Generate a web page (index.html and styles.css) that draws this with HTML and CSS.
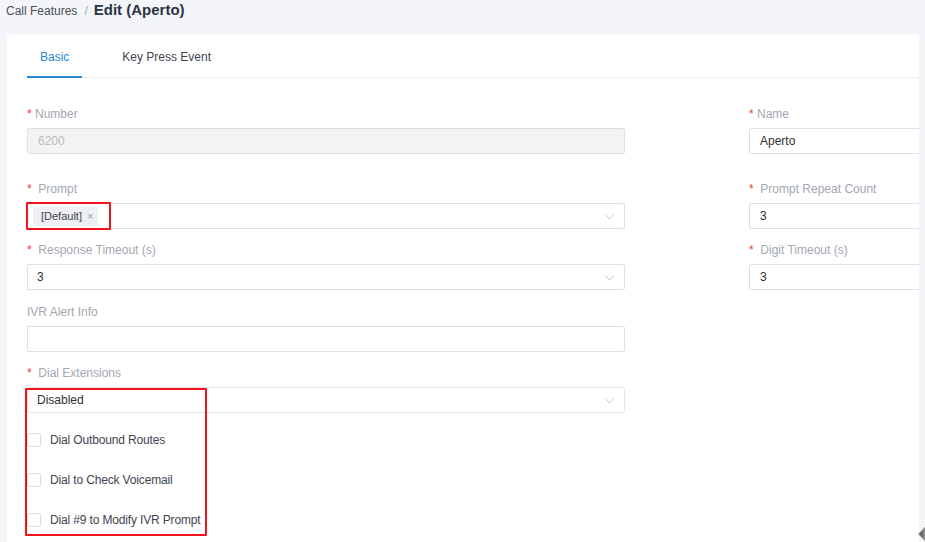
FILE: index.html
```html
<!DOCTYPE html>
<html>
<head>
<meta charset="utf-8">
<link rel="stylesheet" href="styles.css">
</head>
<body>
<div class="crumbs">
  <span class="crumb-link">Call Features</span>
  <span class="crumb-sep">/</span>
  <span class="crumb-title">Edit (Aperto)</span>
</div>
<div class="card">
  <div class="tabs">
    <div class="tab active">Basic</div>
    <div class="tab">Key Press Event</div>
  </div>
  <div class="form">
    <div class="col">
      <div class="field first">
        <div class="label"><span class="req">*</span> Number</div>
        <div class="input disabled">6200</div>
      </div>
      <div class="field">
        <div class="label"><span class="req">*</span>&nbsp; Prompt</div>
        <div class="input select">
          <span class="tag">[Default] <span class="tag-x">×</span></span>
          <span class="mark mark-tag"></span>
          <svg class="chev" width="9" height="6" viewBox="0 0 9 6"><path d="M0.5 0.5 L4.5 5 L8.5 0.5" fill="none" stroke="#c0c4cc" stroke-width="1"/></svg>
        </div>
      </div>
      <div class="field wide">
        <div class="label"><span class="req">*</span>&nbsp; Response Timeout (s)</div>
        <div class="input select">3
          <svg class="chev" width="9" height="6" viewBox="0 0 9 6"><path d="M0.5 0.5 L4.5 5 L8.5 0.5" fill="none" stroke="#c0c4cc" stroke-width="1"/></svg>
        </div>
      </div>
      <div class="field">
        <div class="label">IVR Alert Info</div>
        <div class="input"></div>
      </div>
      <div class="field dial">
        <div class="label"><span class="req">*</span>&nbsp; Dial Extensions</div>
        <div class="input select">Disabled
          <svg class="chev" width="9" height="6" viewBox="0 0 9 6"><path d="M0.5 0.5 L4.5 5 L8.5 0.5" fill="none" stroke="#c0c4cc" stroke-width="1"/></svg>
        </div>
        <div class="checks">
          <label class="check"><span class="box"></span>Dial Outbound Routes</label>
          <label class="check"><span class="box"></span>Dial to Check Voicemail</label>
          <label class="check"><span class="box"></span>Dial #9 to Modify IVR Prompt</label>
        </div>
        <span class="mark mark-dial"></span>
      </div>
    </div>
    <div class="col">
      <div class="field first">
        <div class="label"><span class="req">*</span> Name</div>
        <div class="input">Aperto</div>
      </div>
      <div class="field">
        <div class="label"><span class="req">*</span>&nbsp; Prompt Repeat Count</div>
        <div class="input">3</div>
      </div>
      <div class="field wide">
        <div class="label"><span class="req">*</span>&nbsp; Digit Timeout (s)</div>
        <div class="input">3</div>
      </div>
    </div>
  </div>
</div>
<svg class="edge-arrow" width="8" height="14" viewBox="0 0 8 14"><path d="M7 0 L7 14 L0 7 Z" fill="#8a8a8a"/><path d="M5 3 L5 11 L1.5 7 Z" fill="#666"/></svg>
</body>
</html>
```
FILE: styles.css
```css
* { box-sizing: border-box; }
html, body { margin: 0; padding: 0; }
body {
  width: 925px;
  height: 542px;
  overflow: hidden;
  background: #f4f5f8;
  font-family: "Liberation Sans", Arial, sans-serif;
  font-size: 12px;
  color: #303133;
  position: relative;
}
.crumbs {
  height: 35px;
  padding: 1px 0 0 6px;
  display: flex;
  align-items: baseline;
}
.crumb-link { color: #4a4f5a; font-size: 12px; }
.crumb-sep { color: #a8abb2; margin: 0 6px 0 7px; font-size: 12px; }
.crumb-title { color: #2c3444; font-size: 15px; font-weight: bold; }
.card {
  margin-left: 7px;
  width: 912px;
  height: 507px;
  background: #fff;
  overflow: hidden;
}
.tabs {
  margin-left: 20px;
  height: 43px;
  display: flex;
  border-bottom: 1px solid #eceef2;
}
.tab {
  padding: 3px 13px 0;
  margin-right: 27px;
  display: flex;
  align-items: center;
  color: #3f4451;
  font-size: 12px;
  margin-bottom: -1px;
  border-bottom: 2px solid transparent;
}
.tab.active {
  color: #2a86d1;
  border-bottom-color: #2a86d1;
}
.form {
  display: flex;
  gap: 124px;
  padding: 28px 0 0 20px;
}
.col {
  width: 598px;
  flex: none;
}
.field { margin-bottom: 13px; position: relative; }
.field.first { margin-bottom: 27px; }
.field.wide { margin-bottom: 14px; }
.label {
  line-height: 16px;
  height: 16px;
  margin-bottom: 6px;
  color: #a3a7b1;
  font-size: 12px;
}
.req { color: #f0393d; }
.input {
  position: relative;
  height: 26px;
  border: 1px solid #dcdfe6;
  border-radius: 2px;
  padding: 0 10px;
  display: flex;
  align-items: center;
  color: #303133;
  font-size: 12px;
}
.input.disabled {
  background: #f3f3f3;
  color: #b8bbc1;
}
.input.select { padding-left: 9px; }
.chev { position: absolute; right: 10px; top: 10px; }
.tag {
  background: #eef0f4;
  color: #3f4451;
  font-size: 11px;
  height: 19px;
  line-height: 19px;
  padding: 0 5px 0 8px;
  margin-left: -4px;
  border-radius: 2px;
}
.tag-x { color: #9a9ea8; margin-left: 2px; }
.mark {
  position: absolute;
  border: 2px solid #f0131a;
  border-radius: 1px;
}
.mark-tag { left: -2px; top: -2px; width: 85px; height: 28px; }
.dial .input { border-color: #e2e4ea; }
.checks {
  padding-top: 20px;
  display: flex;
  flex-direction: column;
  gap: 26px;
}
.check {
  display: flex;
  align-items: center;
  height: 14px;
  color: #3f4451;
  font-size: 12px;
  letter-spacing: -0.15px;
}
.box {
  width: 14px;
  height: 14px;
  border: 1px solid #dcdfe6;
  border-radius: 2px;
  margin-right: 9px;
  background: #fff;
}
.mark-dial { left: -2px; top: 23px; width: 182px; height: 148px; }
.edge-arrow { position: absolute; left: 918px; top: 527px; }
```
